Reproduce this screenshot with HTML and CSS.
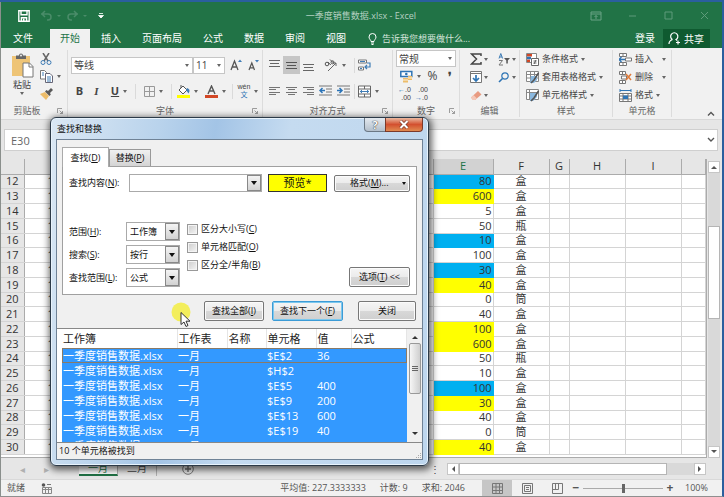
FILE: index.html
```html
<!DOCTYPE html>
<html lang="zh-CN">
<head>
<meta charset="utf-8">
<title>一季度销售数据.xlsx - Excel</title>
<link rel="stylesheet" href="styles.css">
</head>
<body>
<div class="app">
  <header class="titlebar">
    <div class="quick">
      <button class="ico" aria-label="保存"><svg width="12" height="12" viewBox="0 0 12 12"><path d="M.8.8h10.4v10.4H.8zM3 .8v4h6v-4M3.4 11V7.800h5.200V11" fill="none" stroke="#fff" stroke-width="1.400"/><path d="M5 8.500h1.500V11H5z" fill="#fff"/></svg></button>
      <button class="ico" aria-label="撤消"><svg width="22" height="12" viewBox="0 0 22 12"><path d="M1 4h7a3 3 0 0 1 0 6H7M5 1L2 4l3 3" fill="none" stroke="#4a8c69" stroke-width="1.500"/><path d="M17 5h4l-2 2z" fill="#4a8c69"/></svg></button>
      <button class="ico" aria-label="恢复"><svg width="22" height="12" viewBox="0 0 22 12"><path d="M11 4H4a3 3 0 0 0 0 6h1M7 1l3 3-3 3" fill="none" stroke="#4a8c69" stroke-width="1.500"/><path d="M16 5h4l-2 2z" fill="#4a8c69"/></svg></button>
      <button class="ico" aria-label="自定义快速访问工具栏"><svg width="6" height="6" viewBox="0 0 6 6"><path d="M1 .5h4M.5 2.500h5L3 5z" fill="#fff" stroke="#fff" stroke-width=".8"/></svg></button>
    </div>
    <div class="doc-title">一季度销售数据.xlsx - Excel</div>
    <div class="window-controls">
      <button class="ico" aria-label="功能区显示选项"><svg width="12" height="10" viewBox="0 0 12 10"><path d="M1 1h10v8H1zM1 3h10M6 8V4.500M4.500 6L6 4.500 7.500 6" fill="none" stroke="#6aa385"/></svg></button>
      <button class="ico" aria-label="最小化"><svg width="9" height="9" viewBox="0 0 9 9"><path d="M1 5h7" stroke="#5e9b7a"/></svg></button>
      <button class="ico" aria-label="最大化"><svg width="9" height="9" viewBox="0 0 9 9"><path d="M1 1h7v7H1z" fill="none" stroke="#5e9b7a"/></svg></button>
      <button class="ico" aria-label="关闭"><svg width="9" height="9" viewBox="0 0 9 9"><path d="M1 1l7 7M8 1L1 8" stroke="#5e9b7a"/></svg></button>
    </div>
  </header>

  <nav class="tabs">
    <a class="file" href="#">文件</a>
    <a class="active" href="#">开始</a>
    <a href="#">插入</a>
    <a href="#">页面布局</a>
    <a href="#">公式</a>
    <a href="#">数据</a>
    <a href="#">审阅</a>
    <a href="#">视图</a>
    <a class="tell" href="#"><svg width="9" height="12" viewBox="0 0 9 12"><path d="M3 8.500C3 7 1 6 1 4a3.500 3.500 0 0 1 7 0c0 2-2 3-2 4.500zM3 10h3M3.500 11.500h2" fill="none" stroke="#fff"/></svg>告诉我您想要做什么...</a>
    <a class="login" href="#">登录</a>
    <button class="share"><svg width="13" height="13" viewBox="0 0 13 13"><path d="M1 12c0-3 2-4 3.500-4.500M4.500 7.500A3.600 3.600 0 1 1 8 7.500L9 8.500M10 8.500v4M8 10.500h4" fill="none" stroke="#fff" stroke-width="1.200"/></svg>共享</button>
  </nav>

  <section class="ribbon">
    <div class="group clip">
      <div class="tools">
        <button class="paste">
          <svg width="23" height="25" viewBox="0 0 23 25"><path d="M1 3h18v20H1z" fill="#eec476"/><path d="M5 6V2.500h3a2 2 0 0 1 4 0h3V6z" fill="#666"/><circle cx="10" cy="2.500" r="1" fill="#eee"/><path d="M12 10h6.500l3.500 3.500V24H12z" fill="#fff" stroke="#777"/><path d="M18 10v4h4" fill="none" stroke="#777"/></svg>
          粘贴<i class="caret"></i>
        </button>
        <div class="col">
          <button class="ico" aria-label="剪切"><svg width="12" height="12" viewBox="0 0 12 12"><path d="M3 0l5 8M9 0L4 8" stroke="#666" stroke-width="1.500"/><circle cx="3" cy="9.500" r="2" fill="none" stroke="#3f7cb5"/><circle cx="9" cy="9.500" r="2" fill="none" stroke="#3f7cb5"/></svg></button>
          <button class="ico" aria-label="复制"><svg width="13" height="13" viewBox="0 0 13 13"><path d="M.5.5h4l2 2v6.500h-6z" fill="#fff" stroke="#777"/><path d="M5.500 3.500h4.500l2.500 2.500v6.500h-7z" fill="#fff" stroke="#667"/><path d="M2 3h2M2 5h2M7 7h4M7 9h4M7 11h4" stroke="#3f7cb5"/></svg><i class="caret"></i></button>
          <button class="ico" aria-label="格式刷"><svg width="13" height="12" viewBox="0 0 13 12"><path d="M0 6l5-2 4 4-3 4z" fill="#edbd6a"/><path d="M5 3.500l1.500-1.500L8 3l3-3 2 2-3 3 .8 1.500L9.500 8z" fill="#595959"/></svg></button>
        </div>
      </div>
      <div class="label">剪贴板<svg class="launch" width="6" height="6" viewBox="0 0 6 6"><path d="M.5 5V.5H5M2.500 2.500l3 3M5.500 3v2.500H3" fill="none" stroke="#888" stroke-width=".8"/></svg></div>
    </div>

    <div class="group font">
      <div class="tools rows">
        <div class="row">
          <span class="combo face"><select aria-label="字体"><option>等线</option></select></span>
          <span class="combo size"><select aria-label="字号"><option>11</option></select></span>
          <button class="ico w18" aria-label="增大字号"><svg width="13" height="12" viewBox="0 0 13 12"><path d="M1 11L4.500 2 8 11M2.200 8h4.600" fill="none" stroke="#555" stroke-width="1.300"/><path d="M8 3l2-2.500L12 3z" fill="#3f7cb5"/></svg></button>
          <button class="ico w18" aria-label="减小字号"><svg width="12" height="12" viewBox="0 0 12 12"><path d="M1 11L3.800 4 6.500 11M2 8.800h3.600" fill="none" stroke="#555" stroke-width="1.200"/><path d="M7 1l2 2.500L11 1z" fill="#3f7cb5"/></svg></button>
        </div>
        <div class="row">
          <button class="ico w17 b">B</button><button class="ico w17 i">I</button>
          <button class="ico w28"><u class="b">U</u><i class="caret"></i></button><i class="bar"></i>
          <button class="ico w32" aria-label="边框"><svg width="11" height="11" viewBox="0 0 11 11"><path d="M.5.5h10v10H.5zM5.500 0v11M0 5.500h11" fill="none" stroke="#999"/></svg><i class="caret"></i></button><i class="bar"></i>
          <button class="ico w28" aria-label="填充颜色"><svg width="13" height="13" viewBox="0 0 13 13"><path d="M2 5l4-4 4 4-4 4zM4 3V0" fill="#fff" stroke="#555"/><path d="M10 3c3 1 3 3 1.500 5.500L9 5z" fill="#3f7cb5"/><path d="M0 10h13v3H0z" fill="#ff0"/></svg><i class="caret"></i></button>
          <button class="ico w28" aria-label="字体颜色"><svg width="13" height="13" viewBox="0 0 13 13"><path d="M3 9L6.500 1 10 9M4 6h5" fill="none" stroke="#555" stroke-width="1.400"/><path d="M0 10h13v3H0z" fill="#d24726"/></svg><i class="caret"></i></button><i class="bar"></i>
          <button class="ico w28"><span class="wen"><b>wén</b><em>文</em></span><i class="caret"></i></button>
        </div>
      </div>
      <div class="label">字体<svg class="launch" width="6" height="6" viewBox="0 0 6 6"><path d="M.5 5V.5H5M2.500 2.500l3 3M5.500 3v2.500H3" fill="none" stroke="#888" stroke-width=".8"/></svg></div>
    </div>

    <div class="group align">
      <div class="tools rows">
        <div class="row">
          <button class="ico w17" aria-label="顶端对齐"><svg width="11" height="13" viewBox="0 0 11 13"><path d="M0 1.500h11M1 4.500h9M0 7.500h11" stroke="#666"/></svg></button>
          <button class="ico w17 on" aria-label="垂直居中"><svg width="11" height="11" viewBox="0 0 11 11"><path d="M0 2.500h11M1 5.500h9M0 8.500h11" stroke="#555"/></svg></button>
          <button class="ico w17" aria-label="底端对齐"><svg width="11" height="13" viewBox="0 0 11 13"><path d="M0 5.500h11M1 8.500h9M0 11.500h11" stroke="#666"/></svg></button>
          <button class="ico w35" aria-label="方向"><svg width="14" height="13" viewBox="0 0 14 13"><path d="M4 12l8-8M9 4h3v3" fill="none" stroke="#666"/><circle cx="3" cy="5" r="1.800" fill="none" stroke="#555"/><path d="M3.800 3l3 3M6 .5l3.500 3.500" stroke="#555"/><circle cx="8.500" cy="3.300" r="1.500" fill="none" stroke="#555"/></svg><i class="caret"></i></button><i class="bar"></i>
          <button class="ico w28 start" aria-label="自动换行"><svg width="13" height="13" viewBox="0 0 13 13"><path d="M.5 1h8v3h-8zM.5 8h5v3h-5z" fill="#fff" stroke="#777"/><path d="M2 2.500h5M2 9.500h2" stroke="#3f7cb5"/><path d="M9 4h3v4H7M9 6L7 8l2 2" fill="none" stroke="#3f7cb5" stroke-width="1.200"/></svg></button>
        </div>
        <div class="row">
          <button class="ico w17" aria-label="左对齐"><svg width="11" height="10" viewBox="0 0 11 10"><path d="M0 1.500h11M0 3.500h7M0 6.500h11M0 8.500h7" stroke="#666" stroke-width=".9"/></svg></button>
          <button class="ico w17" aria-label="居中"><svg width="11" height="10" viewBox="0 0 11 10"><path d="M0 1.500h11M2 3.500h7M0 6.500h11M2 8.500h7" stroke="#666" stroke-width=".9"/></svg></button>
          <button class="ico w17" aria-label="右对齐"><svg width="11" height="10" viewBox="0 0 11 10"><path d="M0 1.500h11M4 3.500h7M0 6.500h11M4 8.500h7" stroke="#666" stroke-width=".9"/></svg></button>
          <button class="ico w17" aria-label="减少缩进量"><svg width="13" height="12" viewBox="0 0 13 12"><path d="M0 1h13M7 4h6M7 7h6M0 10h13" stroke="#777"/><path d="M1 5.500h5M3.500 3L1 5.500 3.500 8" fill="none" stroke="#2b74b8" stroke-width="1.500"/></svg></button>
          <button class="ico w18" aria-label="增加缩进量"><svg width="13" height="12" viewBox="0 0 13 12"><path d="M0 1h13M7 4h6M7 7h6M0 10h13" stroke="#777"/><path d="M0 5.500h5M2.500 3L5 5.500 2.500 8" fill="none" stroke="#2b74b8" stroke-width="1.500"/></svg></button><i class="bar"></i>
          <button class="ico w28 start" aria-label="合并后居中"><svg width="13" height="13" viewBox="0 0 13 13"><path d="M.5 1h12v11H.5zM.5 4h12M.5 9h12M6.500 1v3M6.500 9v3" fill="#fff" stroke="#666"/><path d="M2 6.500h9M4 5L2.300 6.500 4 8M9 5l1.700 1.500L9 8" fill="none" stroke="#3f7cb5"/></svg><i class="caret"></i></button>
        </div>
      </div>
      <div class="label">对齐方式<svg class="launch" width="6" height="6" viewBox="0 0 6 6"><path d="M.5 5V.5H5M2.500 2.500l3 3M5.500 3v2.500H3" fill="none" stroke="#888" stroke-width=".8"/></svg></div>
    </div>

    <div class="group number">
      <div class="tools three">
        <span class="combo fmt"><select aria-label="数字格式"><option>常规</option></select></span>
        <div class="row">
          <button class="ico w28" aria-label="会计数字格式"><svg width="13" height="13" viewBox="0 0 13 13"><path d="M.8 1.500h11v5H.8z" fill="#fff" stroke="#2f75b5" stroke-width="1.500"/><circle cx="6.300" cy="4" r="1.300" fill="#2f75b5"/><path d="M3 8h5v4.500H3zM8 6h4v4H8z" fill="#edbd6a"/><path d="M3 10h5M8 8h4" stroke="#fff" stroke-width=".8"/></svg><i class="caret"></i></button>
          <button class="ico w17 pct">%</button>
          <button class="ico w17 b">❜</button>
        </div>
        <div class="row">
          <button class="ico w17"><span class="dec"><b>←</b>.0<br>.00</span></button>
          <button class="ico w17"><span class="dec">.00<br><b>→</b>.0</span></button>
        </div>
      </div>
      <div class="label">数字<svg class="launch" width="6" height="6" viewBox="0 0 6 6"><path d="M.5 5V.5H5M2.500 2.500l3 3M5.500 3v2.500H3" fill="none" stroke="#888" stroke-width=".8"/></svg></div>
    </div>

    <div class="group edit">
      <div class="tools pair">
        <button class="ico" aria-label="自动求和"><svg width="12" height="12" viewBox="0 0 12 12"><path d="M11 3V1H1.500L6.500 6 1.500 11H11V9" fill="none" stroke="#444" stroke-width="1.500"/></svg><i class="caret"></i></button>
        <button class="ico" aria-label="排序和筛选"><svg width="12" height="13" viewBox="0 0 12 13"><path d="M1 5.500L2.800.5l1.800 5M1.500 4h2.600" fill="none" stroke="#3f7cb5"/><path d="M1 7.500h3.500L1 12h4" fill="none" stroke="#777"/><path d="M6 5h6L9.800 7.500v3h-1.500v-3z" fill="#555"/></svg><i class="caret"></i></button>
        <button class="ico" aria-label="填充"><svg width="12" height="12" viewBox="0 0 12 12"><path d="M.5.5h11v11H.5z" fill="#fff" stroke="#777"/><path d="M1 2.500h10" stroke="#777"/><path d="M6 4v6M3 7l3 3 3-3" fill="none" stroke="#2f75b5" stroke-width="1.700"/></svg><i class="caret"></i></button>
        <button class="ico" aria-label="查找和选择"><svg width="12" height="11" viewBox="0 0 12 11"><circle cx="7" cy="4" r="3.200" fill="none" stroke="#2f75b5" stroke-width="1.200"/><path d="M4.500 6.500L1 10" stroke="#2f75b5" stroke-width="1.600"/></svg><i class="caret"></i></button>
        <button class="ico" aria-label="清除"><svg width="12" height="11" viewBox="0 0 12 11"><path d="M1 7.500L8 1l3.500 3.500L5 10H3z" fill="#e89a80"/><path d="M1 7.500L3.500 5 7 8.500 5 10H3z" fill="#f4c8b8"/></svg><i class="caret"></i></button>
      </div>
      <div class="label">编辑</div>
    </div>

    <div class="group styles">
      <div class="tools three">
        <button class="cmd"><svg width="13" height="13" viewBox="0 0 13 13"><path d="M.5.500h10v9H.500z" fill="#fff" stroke="#888"/><path d="M1 1h5v2.500H1zM1 6.500h3V9H1z" fill="#d24726"/><path d="M1 3.700h4v2.500H1z" fill="#2f75b5"/><path d="M5.500 5.500h7v7h-7z" fill="#fff" stroke="#666"/><path d="M7.500 8h3M7.500 10h3M10 7l-2 4" stroke="#444" stroke-width=".8"/></svg>条件格式<i class="caret"></i></button>
        <button class="cmd"><svg width="13" height="13" viewBox="0 0 13 13"><path d="M.5.500h12v10H.500zM.5 3.500h12M.5 7h12M4.500.5v10M8.500.5v10" fill="#fff" stroke="#888"/><path d="M5 5h6v4l-3 3H4z" fill="#8ab8df"/><path d="M12.500 2L8 9l-3 3" fill="none" stroke="#555" stroke-width="1.600"/></svg>套用表格格式<i class="caret"></i></button>
        <button class="cmd"><svg width="13" height="13" viewBox="0 0 13 13"><path d="M.5.500h12v10H.500zM.5 3.500h12M3.500.5v10" fill="#fff" stroke="#888"/><path d="M4 4h7v4l-4 4H4z" fill="#8ab8df"/><path d="M12.500 2L8 9l-3 3" fill="none" stroke="#555" stroke-width="1.600"/></svg>单元格样式<i class="caret"></i></button>
      </div>
      <div class="label">样式</div>
    </div>

    <div class="group cells">
      <div class="tools three">
        <button class="cmd"><svg width="13" height="13" viewBox="0 0 13 13"><path d="M.5.500h7v3h-7zM.5 9.500h7v3h-7zM4 .5v3M4 9.500v3M6.500 5h6v3h-6z" fill="#fff" stroke="#777"/><path d="M0 6.500h6M2.500 4L0 6.500 2.500 9" fill="none" stroke="#2f75b5" stroke-width="1.300"/></svg>插入<i class="caret far"></i></button>
        <button class="cmd"><svg width="13" height="13" viewBox="0 0 13 13"><path d="M.5.500h6v3h-6zM.5 9.500h6v3h-6zM3.500.5v3M3.500 9.500v3M2.500 5h5v3h-5z" fill="#fff" stroke="#777"/><path d="M7 3l5 6M12 3L7 9" stroke="#e07b39" stroke-width="1.500"/></svg>删除<i class="caret far"></i></button>
        <button class="cmd"><svg width="13" height="13" viewBox="0 0 13 13"><path d="M1 0v3M12 0v3M1 1.500h11" stroke="#2f75b5"/><path d="M.5 4.500h12v8H.500zM.5 7h12M.5 10h12M4 4.500v8M9 4.500v8" fill="#fff" stroke="#777"/><path d="M4 6.500h5V10H4z" fill="#2f75b5"/></svg>格式<i class="caret"></i></button>
      </div>
      <div class="label">单元格</div>
    </div>
    <div class="collapse"><svg width="8" height="5" viewBox="0 0 8 5"><path d="M1 4.500l3-3 3 3" fill="none" stroke="#555" stroke-width="1.400"/></svg></div>
  </section>

  <div class="formula-bar">
    <input class="name-box" aria-label="名称框" value="E30">
    <div class="formula"><input aria-label="编辑栏"><svg width="8" height="6" viewBox="0 0 8 6"><path d="M1 1l3 3 3-3" fill="none" stroke="#555" stroke-width="1.400"/></svg></div>
  </div>

  <div class="sheet-area">
    <div class="grid-clip">
      <table class="grid">
        <colgroup><col class="c-row"><col class="c-a"><col class="c-e"><col class="c-f"><col class="c-g"><col class="c-h"><col class="c-h"><col></colgroup>
        <thead><tr><th class="corner"></th><th></th><th class="sel">E</th><th>F</th><th>G</th><th>H</th><th>I</th><th></th></tr></thead>
        <tbody>
          <tr><th>12</th><td>1</td><td class="blue">80</td><td>盒</td><td></td><td></td><td></td><td></td></tr>
          <tr><th>13</th><td>1</td><td class="yellow">600</td><td>盒</td><td></td><td></td><td></td><td></td></tr>
          <tr><th>14</th><td>1</td><td>5</td><td>盒</td><td></td><td></td><td></td><td></td></tr>
          <tr><th>15</th><td>1</td><td>50</td><td>瓶</td><td></td><td></td><td></td><td></td></tr>
          <tr><th>16</th><td>1</td><td class="blue">10</td><td>盒</td><td></td><td></td><td></td><td></td></tr>
          <tr><th>17</th><td>1</td><td>100</td><td>盒</td><td></td><td></td><td></td><td></td></tr>
          <tr><th>18</th><td>1</td><td class="blue">30</td><td>盒</td><td></td><td></td><td></td><td></td></tr>
          <tr><th>19</th><td>1</td><td class="yellow">40</td><td>盒</td><td></td><td></td><td></td><td></td></tr>
          <tr><th>20</th><td>1</td><td>0</td><td>筒</td><td></td><td></td><td></td><td></td></tr>
          <tr><th>21</th><td>1</td><td>40</td><td>盒</td><td></td><td></td><td></td><td></td></tr>
          <tr><th>22</th><td>1</td><td class="yellow">100</td><td>盒</td><td></td><td></td><td></td><td></td></tr>
          <tr><th>23</th><td>1</td><td class="yellow">600</td><td>盒</td><td></td><td></td><td></td><td></td></tr>
          <tr><th>24</th><td>1</td><td>50</td><td>瓶</td><td></td><td></td><td></td><td></td></tr>
          <tr><th>25</th><td>1</td><td>10</td><td>盒</td><td></td><td></td><td></td><td></td></tr>
          <tr><th>26</th><td>1</td><td class="blue">100</td><td>盒</td><td></td><td></td><td></td><td></td></tr>
          <tr><th>27</th><td>1</td><td class="yellow">30</td><td>盒</td><td></td><td></td><td></td><td></td></tr>
          <tr><th>28</th><td>1</td><td>40</td><td>盒</td><td></td><td></td><td></td><td></td></tr>
          <tr><th>29</th><td>1</td><td>0</td><td>筒</td><td></td><td></td><td></td><td></td></tr>
          <tr><th>30</th><td>1</td><td class="yellow">40</td><td>盒</td><td></td><td></td><td></td><td></td></tr>
        </tbody>
      </table>
    </div>
    <div class="vscroll">
      <button aria-label="向上"><svg width="6" height="4" viewBox="0 0 6 4"><path d="M0 4l3-3 3 3z" fill="#555"/></svg></button>
      <div class="track"><i></i></div>
      <button aria-label="向下"><svg width="6" height="4" viewBox="0 0 6 4"><path d="M0 0l3 3 3-3z" fill="#555"/></svg></button>
    </div>
  </div>

  <div class="sheet-tabs">
    <div class="nav"><span>◂</span><span>▸</span></div>
    <a class="current" href="#">一月</a>
    <a href="#">二月</a>
    <button class="add" aria-label="新工作表"><svg width="12" height="12" viewBox="0 0 12 12"><circle cx="6" cy="6" r="5.300" fill="none" stroke="#777"/><path d="M6 3v6M3 6h6" stroke="#666" stroke-width="1.300"/></svg></button>
    <div class="hscroll">
      <span class="grip">⋮</span>
      <button aria-label="向左"><svg width="4" height="6" viewBox="0 0 4 6"><path d="M4 0L1 3l3 3z" fill="#555"/></svg></button>
      <div class="track"><i></i></div>
      <button aria-label="向右"><svg width="4" height="6" viewBox="0 0 4 6"><path d="M0 0l3 3-3 3z" fill="#555"/></svg></button>
    </div>
  </div>

  <footer class="status">
    <span>就绪</span>
    <svg class="macro" width="11" height="11" viewBox="0 0 11 11"><path d="M1.500 4.500h9v6h-9zM1.500 6.500h9M4.500 4.500v6M7.500 4.500v6" fill="none" stroke="#888"/><circle cx="2.500" cy="2" r="1.800" fill="#555"/><path d="M6 1.500h4" stroke="#777"/></svg>
    <span class="stats"><span>平均值: 227.3333333</span><span>计数: 9</span><span>求和: 2046</span></span>
    <div class="views">
      <button class="on" aria-label="普通"><svg width="11" height="11" viewBox="0 0 11 11"><path d="M.5.500h10v10H.500zM.5 4h10M.5 7.500h10M4 .5v10M7.500.5v10" fill="none" stroke="#777"/></svg></button>
      <button aria-label="页面布局"><svg width="11" height="11" viewBox="0 0 11 11"><path d="M.5.500h10v10H.500zM2.500 2.500h6v6h-6zM4 4.500h3M4 6.500h3" fill="none" stroke="#777"/></svg></button>
      <button aria-label="分页预览"><svg width="11" height="11" viewBox="0 0 11 11"><path d="M.5.500h10v10H.500zM.5 6.500h6V.500M3.500.5v6" fill="none" stroke="#777"/></svg></button>
    </div>
    <div class="zoom"><button>−</button><input type="range" min="0" max="100" value="50" aria-label="缩放"><button>+</button><span>100%</span></div>
  </footer>

  <div class="dialog" role="dialog" aria-label="查找和替换">
    <div class="dlg-title"><span>查找和替换</span>
      <div class="dlg-ctl">
        <button class="help" aria-label="帮助">?</button>
        <button class="close" aria-label="关闭"><svg width="10" height="9" viewBox="0 0 10 9"><path d="M1.500 1l7 7M8.500 1l-7 7" stroke="#7c3a2a" stroke-width="3.500"/><path d="M1.500 1l7 7M8.500 1l-7 7" stroke="#fff" stroke-width="2"/></svg></button>
      </div>
    </div>
    <div class="client">
      <div class="dlg-tabs"><button class="active">查找(<u>D</u>)</button><button>替换(<u>P</u>)</button></div>
      <div class="panel">
        <div class="find-row">
          <label for="what">查找内容(<u>N</u>):</label>
          <span class="what"><input id="what"><i class="drop"></i></span>
          <span class="preview">预览*</span>
          <button class="btn format">格式(<u>M</u>)...<i class="caret"></i></button>
        </div>
        <div class="options">
          <div class="scopes">
            <label for="scope">范围(<u>H</u>):</label><span class="dd"><select id="scope"><option>工作簿</option></select><i class="drop"></i></span>
            <label for="order">搜索(<u>S</u>):</label><span class="dd"><select id="order"><option>按行</option></select><i class="drop"></i></span>
            <label for="lookin">查找范围(<u>L</u>):</label><span class="dd"><select id="lookin"><option>公式</option></select><i class="drop"></i></span>
          </div>
          <div class="checks">
            <label><input type="checkbox">区分大小写(<u>C</u>)</label>
            <label><input type="checkbox">单元格匹配(<u>O</u>)</label>
            <label><input type="checkbox">区分全/半角(<u>B</u>)</label>
          </div>
          <button class="btn more">选项(<u>T</u>) &lt;&lt;</button>
        </div>
      </div>
      <div class="actions">
        <button class="btn all">查找全部(<u>I</u>)</button>
        <button class="btn next">查找下一个(<u>F</u>)</button>
        <button class="btn shut">关闭</button>
      </div>
      <div class="results">
        <div class="list">
          <table>
            <colgroup><col class="r1"><col class="r2"><col class="r3"><col class="r4"><col class="r5"><col></colgroup>
            <thead><tr><th>工作簿</th><th>工作表</th><th>名称</th><th>单元格</th><th>值</th><th>公式</th></tr></thead>
            <tbody>
              <tr class="focus"><td>一季度销售数据.xlsx</td><td>一月</td><td></td><td>$E$2</td><td>36</td><td></td></tr>
              <tr><td>一季度销售数据.xlsx</td><td>一月</td><td></td><td>$H$2</td><td></td><td></td></tr>
              <tr><td>一季度销售数据.xlsx</td><td>一月</td><td></td><td>$E$5</td><td>400</td><td></td></tr>
              <tr><td>一季度销售数据.xlsx</td><td>一月</td><td></td><td>$E$9</td><td>200</td><td></td></tr>
              <tr><td>一季度销售数据.xlsx</td><td>一月</td><td></td><td>$E$13</td><td>600</td><td></td></tr>
              <tr><td>一季度销售数据.xlsx</td><td>一月</td><td></td><td>$E$19</td><td>40</td><td></td></tr>
              <tr><td>一季度销售数据.xlsx</td><td>一月</td><td></td><td>$E$22</td><td>100</td><td></td></tr>
            </tbody>
          </table>
        </div>
        <div class="lscroll">
          <svg width="6" height="4" viewBox="0 0 6 4"><path d="M0 4l3-3 3 3z" fill="#333"/></svg>
          <span class="thumb"><i></i></span>
          <svg width="6" height="4" viewBox="0 0 6 4"><path d="M0 0l3 3 3-3z" fill="#333"/></svg>
        </div>
      </div>
      <div class="found">10 个单元格被找到
        <svg width="7" height="7" viewBox="0 0 7 7"><path d="M5 1h1v1H5zM5 3h1v1H5zM5 5h1v1H5zM3 3h1v1H3zM3 5h1v1H3zM1 5h1v1H1z" fill="#aaa"/></svg></div>
    </div>
    <svg class="pointer" width="22" height="26" viewBox="0 0 22 26"><circle cx="10" cy="10" r="9.500" fill="#f3ee5c"/><path d="M10 10.500v12l3-2.500 2 4.500 2-1-2-4.300h4z" fill="#fff" stroke="#333" stroke-width="1"/></svg>
  </div>
</div>
</body>
</html>
```

FILE: styles.css
```css
* { box-sizing: border-box; }
body {
  margin: 0;
  font: 9px/12px "Open Sans", "Noto Sans CJK SC", sans-serif;
  color: #444;
}
button, input, select { font: inherit; color: inherit; margin: 0; padding: 0; border: 0; background: none; border-radius: 0; }
select { appearance: none; width: 100%; height: 100%; }
a { color: inherit; text-decoration: none; }
svg { display: block; flex: none; }
i { font-style: normal; }

.app {
  position: relative;
  display: flex;
  flex-direction: column;
  height: 100vh;
  min-height: 480px;
  border: solid #2a5f9e;
  border-width: 2px 2px 0 0;
  border-bottom: 1px solid #8f8f8f;
  background: #e6e6e6;
  overflow: hidden;
}
.app::before { content: ""; position: absolute; inset: 0 auto 0 0; width: 1px; background: #8a8f8c; }

/* title bar and ribbon tabs */
.titlebar { display: grid; grid-template-columns: 1fr auto 1fr; align-items: center; height: 27px; background: #217346; }
.quick { display: flex; align-items: center; gap: 5px; padding-left: 18px; }
.quick .ico:first-child { margin-right: 5px; }
.quick .ico:last-child { margin-left: 4px; }
.doc-title { color: #b5d0c1; }
.window-controls { display: flex; justify-content: flex-end; }
.window-controls .ico { width: 36px; }
.ico { display: flex; align-items: center; justify-content: center; gap: 4px; }

.tabs { display: flex; align-items: stretch; gap: 1px; height: 19px; background: #217346; color: #fff; font-size: 10px; line-height: 18px; }
.tabs a { padding: 0 10px; }
.tabs .file { padding: 0 16px 0 13px; }
.tabs .active { background: #f1f1f1; color: #217346; }
.tabs .tell { display: flex; align-items: center; gap: 5px; padding-left: 11px; font-size: 9px; color: #d5e5dc; }
.tabs .login { margin-left: auto; padding: 0 7px; }
.share { display: flex; align-items: center; gap: 3px; padding: 0 6px 0 5px; margin-right: 12px; background: #0f5a30; }

/* ribbon */
.ribbon { display: flex; height: 72px; background: #f1f1f1; border-bottom: 1px solid #d8d8d8; }
.group { display: flex; flex-direction: column; flex: none; margin: 2px 0; border-right: 1px solid #dcdcdc; }
.tools { flex: 1; min-height: 0; display: flex; }
.label { position: relative; flex: none; text-align: center; color: #666; height: 13px; line-height: 13px; }
.launch { position: absolute; right: 4px; bottom: 3px; }
.caret { width: 0; height: 0; border: 2px solid transparent; border-top: 3px solid #666; border-bottom: 0; }
.rows { flex-direction: column; gap: 8px; padding-top: 6px; }
.row { display: flex; align-items: center; height: 18px; }
.row .ico { height: 18px; flex: none; }
.row .start { justify-content: flex-start; padding-left: 1px; }
.w17 { width: 17px; } .w18 { width: 18px; } .w28 { width: 28px; } .w32 { width: 32px; } .w35 { width: 35px; }
.bar { width: 1px; height: 15px; background: #dadada; margin: 0 2px; }
.on { background: #c6c6c6; }
.b { font-weight: bold; font-size: 11px; }
.i { font: italic bold 11px "Liberation Serif", serif; }
.three { flex-direction: column; gap: 0; }
.cmd { display: flex; align-items: center; gap: 3px; height: 18px; }
.far { margin-left: 6px; }

.clip { width: 68px; }
.paste { display: flex; flex-direction: column; align-items: center; gap: 1px; padding: 3px 0 0 10px; width: 34px; }
.col { display: flex; flex-direction: column; gap: 5px; padding: 3px 0 0 6px; }
.col .ico { justify-content: flex-start; }
.clip .label { padding-right: 13px; }
.font { width: 195px; }
.font .rows { padding-left: 3px; }
.combo { position: relative; display: block; flex: none; height: 17px; background: #fff; border: 1px solid #c6c6c6; }
.combo::after { content: ""; position: absolute; right: 3px; top: 6px; border: 2px solid transparent; border-top: 3px solid #666; border-bottom: 0; }
.combo select { padding-left: 2px; font-size: 10px; }
.face { width: 122px; }
.size { width: 32px; margin-right: 2px; }
.wen { display: flex; flex-direction: column; font: 7px/8px "Liberation Sans", "Noto Sans CJK SC", sans-serif; text-align: center; }
.wen b { font-weight: normal; }
.wen em { font-style: normal; color: #2f75b5; }
.align { width: 130px; }
.align .rows { padding-left: 3px; }
.number { width: 67px; }
.number .three { padding-left: 3px; }
.fmt { width: 60px; }
.pct { font-size: 12px; }
.dec { font: 7px/8px "Liberation Sans", sans-serif; text-align: right; }
.dec b { color: #2f75b5; }
.edit { width: 60px; }
.pair { display: grid; grid-template-columns: 30px 26px; grid-auto-rows: 18px; align-content: start; padding-left: 4px; }
.pair .ico { gap: 2px; }
.styles { width: 93px; }
.styles .three, .cells .three { padding-left: 6px; }
.cells { width: 59px; }
.collapse { display: flex; flex: 1; justify-content: flex-end; align-items: flex-end; padding: 3px 7px; }

/* formula bar */
.formula-bar { display: flex; gap: 20px; padding: 9px 4px 8px 4px; }
.formula-bar > * { height: 22px; background: #fff; border: 1px solid #cfcfcf; }
.name-box { width: 70px; padding-left: 6px; font-size: 11px; color: #666; }
.formula { flex: 1; display: flex; align-items: center; padding-right: 2px; }
.formula input { flex: 1; min-width: 0; }

/* worksheet */
.sheet-area { flex: 1; min-height: 0; display: flex; padding-left: 1px; }
.grid-clip { flex: 1; min-width: 0; border: solid #ababab; border-width: 0 1px 1px 0; background: #fff; padding-bottom: 2px; }
.grid { width: 100%; height: 100%; table-layout: fixed; border-collapse: collapse; font-size: 11px; line-height: 12px; color: #333; }
.grid th, .grid td { padding: 0; border: solid #d4d4d4; border-width: 0 1px 1px 0; font-weight: normal; }
.grid thead th { height: 15px; background: #e6e6e6; border-color: #ababab; }
.grid tbody th { background: #e6e6e6; border-right-color: #ababab; }
.grid .sel { background: #d2d2d2; color: #217346; }
.corner { background: linear-gradient(135deg, #e6e6e6 70%, #b4b4b4 70%); }
.grid td { text-align: center; }
.grid td:nth-child(2) { text-align: left; padding-left: 23px; }
.grid td:nth-child(3) { text-align: right; padding-right: 1px; }
.grid .blue { background: #00b0f0; border-color: #00b0f0; }
.grid .yellow { background: #ff0; border-color: #ff0; }
.c-row { width: 23px; } .c-a { width: 409px; } .c-e { width: 60px; } .c-f { width: 56px; } .c-g { width: 20px; } .c-h { width: 56px; }

.vscroll { display: flex; flex-direction: column; width: 15px; padding: 2px 2px 0 1px; }
.vscroll button, .hscroll button { display: flex; align-items: center; justify-content: center; flex: none; width: 12px; height: 12px; background: #fff; border: 1px solid #c6c6c6; }
.track { background: #d9d9d9; }
.track i { display: block; background: #fff; border: 1px solid #b5b5b5; }
.vscroll .track { flex: 1; width: 12px; padding-top: 53px; }
.vscroll .track i { height: 93px; }

.sheet-tabs { display: flex; align-items: center; height: 21px; padding-left: 1px; background: #e6e6e6; font-size: 10px; }
.nav { display: flex; justify-content: space-between; width: 78px; padding: 0 30px 0 19px; color: #b0b0b0; }
.sheet-tabs a { width: 39px; height: 18px; line-height: 20px; text-align: center; border-right: 1px solid #b0b0b0; align-self: flex-start; }
.sheet-tabs .current { background: #fff; color: #217346; border-bottom: 2px solid #217346; }
.add { margin-left: 25px; }
.hscroll { display: flex; align-items: center; width: 276px; margin: 0 16px 0 auto; }
.grip { width: 17px; }
.hscroll .track { flex: 1; height: 12px; padding: 0 27px 0 0; }
.hscroll .track i { height: 12px; }

.status { display: flex; align-items: center; height: 17px; padding-left: 7px; background: #f1f1f1; border-top: 1px solid #d9d9d9; color: #555; }
.macro { margin-left: 16px; }
.stats { display: flex; gap: 14px; margin-left: auto; }
.views { display: flex; margin-left: 17px; }
.views button { display: grid; place-items: center; width: 30px; height: 16px; }
.zoom { display: flex; align-items: center; gap: 3px; width: 150px; }
.zoom button { font-size: 12px; font-weight: bold; width: 8px; }
.zoom span { margin-left: 8px; }
.zoom input { appearance: none; flex: none; width: 80px; height: 12px; background: linear-gradient(#aaa, #aaa) center / 100% 1px no-repeat; }
.zoom input::-webkit-slider-thumb { appearance: none; width: 3px; height: 9px; background: #666; }

/* find dialog */
.dialog {
  position: absolute;
  left: 50px;
  top: 115px;
  width: 379px;
  padding: 0 5px 5px;
  border: 1px solid #2c3a48;
  border-radius: 6px;
  background: linear-gradient(100deg, #dbe8f4 0, #b9d3ec 25%, #a3c4e6 38%, #c5dbf0 55%, #bdd6ee 100%);
  box-shadow: inset 0 0 0 1px #e8f3fc, 1px 2px 7px 2px rgba(0, 0, 0, .6);
  color: #111;
}
.dlg-title { display: flex; justify-content: space-between; height: 21px; line-height: 21px; }
.dlg-title span { padding-left: 1px; }
.dlg-ctl { display: flex; height: 14px; }
.dlg-ctl button { display: flex; align-items: center; justify-content: center; border: 1px solid #6b7885; border-top: 0; }
.help { width: 22px; font-size: 11px; font-weight: bold; color: #fff; text-shadow: 0 0 1px #333, 0 0 1px #333; background: linear-gradient(#e3e9ef, #b4c0cc); border-radius: 0 0 0 4px; }
.dlg-ctl .close { width: 38px; margin-left: -1px; background: linear-gradient(#eab9a0, #d3502f 50%, #e08a50); border-color: #7c3a2a; border-radius: 0 0 4px 0; }
.client { background: #f0f0f0; border: 1px solid #6f8296; }
.dlg-tabs { display: flex; align-items: flex-end; height: 26px; padding: 0 5px; }
.dlg-tabs button { width: 42px; height: 17px; border: 1px solid #999; border-bottom: 0; background: linear-gradient(#f0f0f0, #d4d4d4); }
.dlg-tabs .active { width: 47px; height: 20px; margin-bottom: -1px; background: #fff; position: relative; border-color: #aaa; }
.panel { margin: 0 5px; padding: 7px 6px 7px; height: 129px; background: #fff; border: 1px solid #a0a0a0; display: flex; flex-direction: column; justify-content: space-between; }
.find-row { display: flex; align-items: center; }
.find-row > * { flex: none; }
.find-row label { width: 60px; }
.find-row .what { display: flex; flex: 1; min-width: 0; height: 18px; border: 1px solid #aaa; margin-right: 6px; }
.what input { flex: 1; min-width: 0; }
.drop { display: grid; place-items: center; flex: none; width: 14px; border: 1px solid #888; background: linear-gradient(#f4f4f4, #d2d2d2); }
.drop::after { content: ""; border: 3px solid transparent; border-top: 4px solid #111; border-bottom: 0; }
.preview { width: 59px; height: 18px; border: 1px solid #333; background: #ff0; font-size: 11px; line-height: 16px; text-align: center; margin-right: 7px; }
.btn { display: flex; align-items: center; justify-content: center; height: 20px; border: 1px solid #777; border-radius: 2px; background: linear-gradient(#f5f5f5, #ebebeb 50%, #d8d8d8 50%, #cfcfcf); box-shadow: inset 0 0 0 1px #fbfbfb; }
.format { width: 76px; height: 17px; padding: 0 3px 0 15px; justify-content: flex-start; }
.format .caret { border-top-color: #111; margin-left: auto; }
.options { display: flex; align-items: flex-end; }
.scopes { display: grid; grid-template-columns: 57px 54px; grid-auto-rows: 19px; row-gap: 4px; align-items: center; }
.dd { display: flex; height: 19px; border: 1px solid #aaa; }
.dd select { flex: 1; width: auto; min-width: 0; padding-left: 3px; }
.checks { display: flex; flex-direction: column; gap: 6px; align-self: flex-start; padding: 1px 0 0 7px; }
.checks label { display: flex; align-items: center; height: 12px; }
.checks input { appearance: none; width: 11px; height: 11px; margin-right: 3px; border: 1px solid #999; background: linear-gradient(135deg, #ccc, #f5f5f5); box-shadow: inset 0 0 0 1px #f4f4f4; }
.more { width: 61px; margin-left: auto; }
.actions { display: flex; justify-content: flex-end; gap: 8px; padding: 6px 6px 7px; }
.all { width: 60px; } .next { width: 71px; border-color: #3c9bd6; box-shadow: inset 0 0 0 1px #7cc8ee; }
.shut { width: 58px; margin-left: 7px; }
.results { display: flex; height: 115px; border: solid #888; border-width: 1px 0; background: #fff; }
.list { flex: 1; min-width: 0; height: 113px; overflow: hidden; padding-left: 5px; }
.list table { width: 100%; table-layout: fixed; border-collapse: collapse; font-size: 11px; line-height: 15px; }
.list th { height: 19px; padding: 0 0 0 1px; text-align: left; font-weight: normal; color: #222; border-right: 1px solid #e5e5e5; }
.list td { height: 15px; padding: 0 0 0 1px; background: #39f; color: #fff; white-space: nowrap; }
.focus { outline: 1px solid #8a7a66; outline-offset: -1px; }
.r1 { width: 115px; } .r2 { width: 50px; } .r3 { width: 39px; } .r4 { width: 50px; } .r5 { width: 35px; }
.lscroll { display: flex; flex-direction: column; align-items: center; gap: 4px; width: 15px; padding: 6px 1px; background: #f0f0f0; }
.lscroll svg:last-child { margin-top: auto; }
.thumb { display: grid; place-items: center; width: 12px; height: 51px; border: 1px solid #999; border-radius: 2px; background: linear-gradient(90deg, #f6f6f6, #cfcfcf); }
.thumb i { width: 6px; height: 5px; background: repeating-linear-gradient(#666 0 1px, transparent 1px 2px); }
.found { display: flex; justify-content: space-between; align-items: flex-end; height: 16px; padding-left: 2px; line-height: 16px; }
.pointer { position: absolute; left: 120px; top: 184px; }
```
